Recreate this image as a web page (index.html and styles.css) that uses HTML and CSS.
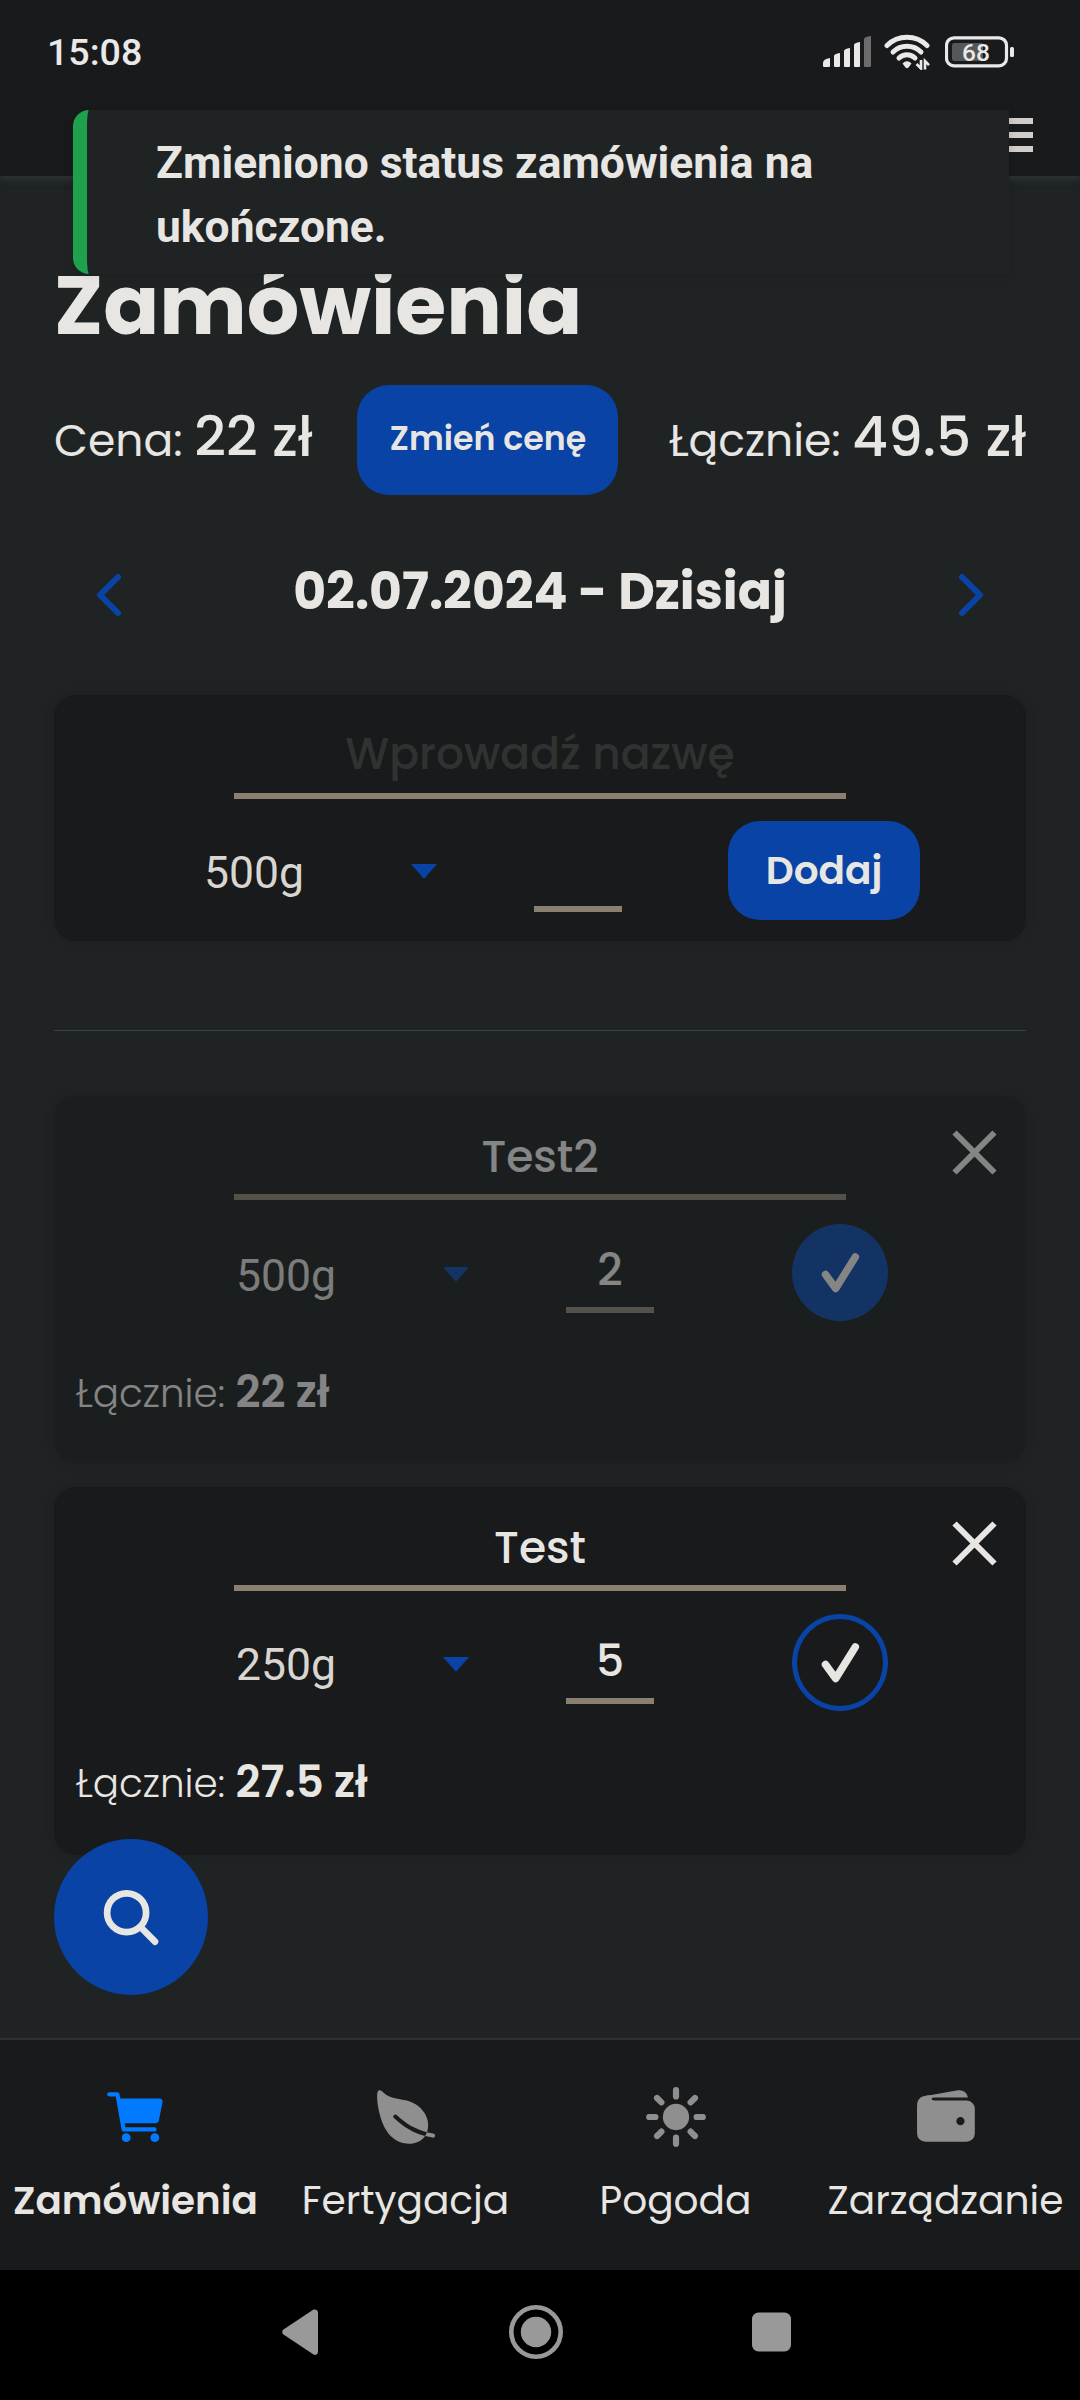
FILE: index.html
```html
<!DOCTYPE html>
<html lang="pl">
<head>
<meta charset="utf-8">
<title>Zamówienia</title>
<link rel="stylesheet" href="styles.css">
</head>
<body>
<div class="screen">
  <div class="status-bar">
    <span class="clock">15:08</span>
    <div class="status-icons">
      <svg width="48" height="34" viewBox="0 0 48 34">
        <g fill="#e9e9e9">
          <path d="M0 31v-3q0-4 7-5v8q0 1-1 1H1q-1 0-1-1z"/>
          <path d="M11 31V21q0-2 6-3v13q0 1-1 1h-4q-1 0-1-1z"/>
          <path d="M21 31V16q0-2 6-3v18q0 1-1 1h-4q-1 0-1-1z"/>
          <path d="M31 31V10q0-2 6-3v24q0 1-1 1h-4q-1 0-1-1z"/>
        </g>
        <path fill="#6c6c6d" d="M41 31V4q0-2 7-3v30q0 1-1 1h-5q-1 0-1-1z"/>
      </svg>
      <svg class="wifi" width="46" height="36" viewBox="0 0 46 36">
        <g fill="none" stroke="#e9e9e9" stroke-width="5" stroke-linecap="round">
          <path d="M3 11.500a28.500 28.500 0 0 1 40 0"/>
          <path d="M9 18a20 20 0 0 1 28 0"/>
          <path d="M15 24a11.500 11.500 0 0 1 16 0"/>
        </g>
        <path fill="#e9e9e9" d="M18.500 29.500q4.500-4.500 9 0L24.500 33.500q-1.500 1.500-3 0z"/>
        <path fill="none" stroke="#e9e9e9" stroke-width="2.600" d="M37 26v8.500l-4.500-4.500M41 35.500V27l4 4.200"/>
      </svg>
      <svg class="battery" width="70" height="32" viewBox="0 0 70 32">
        <rect x="7" y="7" width="31" height="18" rx="2.500" fill="#565758"/>
        <rect x="1.500" y="1.800" width="60" height="28" rx="7.500" fill="none" stroke="#e9e9e9" stroke-width="3.200"/>
        <rect x="65" y="11" width="4" height="10" rx="1.500" fill="#e9e9e9"/>
        <text class="battery-level" x="31" y="24.500" text-anchor="middle">68</text>
      </svg>
    </div>
  </div>

  <header class="header">
    <svg width="44" height="34" viewBox="0 0 44 34" fill="#d1cec9">
      <rect width="44" height="6"/><rect y="14" width="44" height="6"/><rect y="28" width="44" height="6"/>
    </svg>
  </header>

  <main class="main">
    <h1 class="title">Zamówienia</h1>

    <section class="prices">
      <p class="price">Cena: <b>22 zł</b></p>
      <button class="btn btn-price">Zmień cenę</button>
      <p class="price price-total">Łącznie: <b>49.5 zł</b></p>
    </section>

    <nav class="days">
      <svg class="chevron" width="28" height="46" viewBox="0 0 28 46"><path d="M23 5L5 23l18 18"/></svg>
      <h2 class="day">02.07.2024 - Dzisiaj</h2>
      <svg class="chevron" width="28" height="46" viewBox="0 0 28 46"><path d="M5 5l18 18L5 41"/></svg>
    </nav>

    <section class="card card-new">
      <div class="field name placeholder">Wprowadź nazwę</div>
      <div class="controls">
        <div class="select"><span>500g</span><i class="arrow"></i></div>
        <div class="field qty"></div>
        <button class="btn btn-add">Dodaj</button>
      </div>
    </section>

    <hr class="divider">

    <article class="card order done">
      <svg class="close" width="45" height="45" viewBox="0 0 45 45"><path d="M2.500 2.500l40 40M42.500 2.500l-40 40"/></svg>
      <div class="field name">Test2</div>
      <div class="controls">
        <div class="select"><span>500g</span><i class="arrow"></i></div>
        <div class="field qty">2</div>
        <div class="check"><svg width="40" height="42" viewBox="-20 -21 40 42"><path d="M-14.500 1.500L-4.300 15.500 15.300-16"/></svg></div>
      </div>
      <p class="sum">Łącznie: <b>22 zł</b></p>
    </article>

    <article class="card order">
      <svg class="close" width="45" height="45" viewBox="0 0 45 45"><path d="M2.500 2.500l40 40M42.500 2.500l-40 40"/></svg>
      <div class="field name">Test</div>
      <div class="controls">
        <div class="select"><span>250g</span><i class="arrow"></i></div>
        <div class="field qty">5</div>
        <div class="check"><svg width="40" height="42" viewBox="-20 -21 40 42"><path d="M-14.500 1.500L-4.300 15.500 15.300-16"/></svg></div>
      </div>
      <p class="sum">Łącznie: <b>27.5 zł</b></p>
    </article>
  </main>

  <nav class="tabs">
    <a class="tab active">
      <svg width="66" height="66" viewBox="0 0 512 512"><circle cx="180" cy="416" r="34"/><circle cx="402" cy="416" r="34"/><path d="M456.800 120.780a23.920 23.920 0 00-18.560-8.780H133.890l-6.130-34.780A16 16 0 00112 64H48a16 16 0 000 32h50.580l45.660 258.780A16 16 0 00160 368h240a16 16 0 000-32H173.420l-5.640-32h241.660A24.070 24.070 0 00433 284.710l28.800-144a24 24 0 00-5-19.930z"/></svg>
      <span>Zamówienia</span>
    </a>
    <a class="tab">
      <svg width="66" height="66" viewBox="0 0 512 512"><path d="M161.350 242a16 16 0 0122.620-.680c73.630 69.360 147.510 111.560 234.450 133.070 11.730-32 12.770-67.220 2.640-101.580-13.440-45.590-44.740-85.310-90.490-114.860-40.840-26.380-81.660-33.250-121.150-39.890-49.820-8.380-96.880-16.300-141.790-63.850-5-5.260-11.810-7.370-18.320-5.660-7.440 2-12.430 7.880-14.820 17.600-5.600 22.750-2 86.510 13.750 153.820 25.290 108.140 65.650 162.860 95.060 189.730 38 34.690 87.620 53.900 136.930 53.900a186 186 0 0027.770-2.040c41.710-6.320 76.430-27.270 96-57.750-89.490-23.280-165.940-67.550-242-139.160a16 16 0 01-.650-22.650zM467.430 384.190c-16.830-2.590-33.130-5.840-49-9.770a157.710 157.710 0 01-12.130 25.680c-.730 1.250-1.500 2.490-2.290 3.710a584.210 584.210 0 0058.560 12 16 16 0 104.870-31.620z"/></svg>
      <span>Fertygacja</span>
    </a>
    <a class="tab">
      <svg width="66" height="66" viewBox="0 0 512 512"><circle cx="256" cy="256" r="102"/><path class="rays" d="M256 48v48M256 416v48M48 256h48M416 256h48M369.140 142.860l33.940-33.940M108.920 403.080l33.940-33.940M369.140 369.140l33.940 33.940M108.920 108.920l33.940 33.940"/></svg>
      <span>Pogoda</span>
    </a>
    <a class="tab">
      <svg width="66" height="66" viewBox="0 0 512 512"><path d="M95.500 104h320a87.730 87.730 0 0111.180.710 66 66 0 00-77.510-55.560L86 94.080h-.300a66 66 0 00-41.070 26.130A87.570 87.570 0 0195.500 104z"/><path fill-rule="evenodd" d="M415.500 128h-320a64.070 64.070 0 00-64 64v192a64.070 64.070 0 0064 64h320a64.070 64.070 0 0064-64V192a64.070 64.070 0 00-64-64zM368 320a32 32 0 1132-32 32 32 0 01-32 32z"/><path d="M32 259.500V160c0-21.670 12-58 53.650-65.870C121 87.500 156 87.500 156 87.500s23 16 4 16-18.500 24.500 0 24.500 0 23.500 0 23.500L85.500 236z"/></svg>
      <span>Zarządzanie</span>
    </a>
  </nav>

  <div class="system-nav">
    <svg width="60" height="60" viewBox="0 0 60 60"><path d="M45 7.500a3 3 0 0 1 3 2.500v40a3 3 0 0 1-4.500 2.500L13.500 32.500a3 3 0 0 1 0-5L43.500 7.500z"/></svg>
    <svg width="60" height="60" viewBox="0 0 60 60"><circle cx="30" cy="30" r="24.700" fill="none" stroke="#999" stroke-width="4.600"/><circle cx="30" cy="30" r="15.200"/></svg>
    <svg width="60" height="60" viewBox="0 0 60 60"><rect x="10" y="10.500" width="39" height="39" rx="6.500"/></svg>
  </div>

  <button class="search">
    <svg width="60" height="60" viewBox="0 0 60 60"><ellipse cx="25.600" cy="25.700" rx="19.500" ry="19.400"/><path d="M40 40.500l14 14.200"/></svg>
  </button>

  <div class="toast">Zmieniono status zamówienia na<br>ukończone.</div>
</div>
</body>
</html>
```
FILE: styles.css
```css
* { box-sizing: border-box; margin: 0; padding: 0; }

body {
  background: #1f2324;
  color: #e8e6e3;
  font-family: Poppins, Inter, sans-serif;
}

svg { display: block; flex: none; }

.screen {
  position: relative;
  display: flex;
  flex-direction: column;
  width: 1080px;
  height: 2400px;
  overflow: hidden;
}

/* Status bar and header */
.status-bar {
  display: flex;
  align-items: center;
  justify-content: space-between;
  height: 104px;
  padding: 0 65px 0 47px;
  background: #191a1c;
}
.clock { font: 500 37.6px/104px Roboto, sans-serif; color: #e9e9e9; }
.status-icons { display: flex; align-items: center; }
.wifi { margin: 0 15px 0 13px; }
.battery { margin-top: -1px; }
.battery-level { font: 500 24.500px Roboto, sans-serif; fill: #e9e9e9; }

.header {
  position: relative;
  z-index: 1;
  display: flex;
  justify-content: flex-end;
  height: 72px;
  padding: 14px 47px 0 0;
  background: #191a1c;
  box-shadow: 0 2px 8px #34393b;
  clip-path: inset(0 0 -14px 0);
}

/* Page content */
.main { height: 1862px; padding: 79px 54px 0; }

.title { padding-top: 1px; font-size: 82.600px; font-weight: 700; line-height: 99px; }

.prices { display: flex; height: 110px; margin-top: 30px; }
.price { padding-top: 1px; font-size: 44px; font-weight: 400; line-height: 109px; white-space: nowrap; }
.price b { font-size: 55px; font-weight: 500; line-height: 1; }
.price-total { margin-left: auto; }

.btn {
  border: 0;
  border-radius: 32px;
  background: #0843a5;
  color: #e8e6e3;
  font-family: inherit;
  font-weight: 600;
}
.btn-price { width: 261px; margin-left: 45px; padding-bottom: 3px; font-size: 33.200px; font-weight: 600; }
.btn-add { width: 192px; height: 99px; margin: 1px 0 0 106px; font-size: 39px; }

.days {
  display: flex;
  align-items: center;
  justify-content: space-between;
  height: 80px;
  margin-top: 56px;
  padding: 0 41px;
}
.day { padding-top: 2px; font-size: 50.400px; font-weight: 700; line-height: 80px; }
.chevron { margin-top: 8px; fill: none; stroke: #0843a5; stroke-width: 6; stroke-linecap: round; stroke-linejoin: round; }

/* Cards */
.card {
  position: relative;
  padding: 28px 0 0;
  border-radius: 22px;
  background: #191a1b;
  box-shadow: 0 0 12px rgba(0, 0, 0, .12);
}
.card-new { height: 246px; margin-top: 64px; }
.order { height: 367px; }
.order + .order { height: 368px; margin-top: 24px; }
.done { opacity: .5; }

.field {
  height: 76px;
  border-bottom: 6px solid #8a8072;
  font-size: 44px;
  font-weight: 500;
  line-height: 65px;
  text-align: center;
}
.name { width: 612px; margin: 0 auto; }
.placeholder { color: #303232; line-height: 61px; }
.qty { width: 88px; margin: 16px 0 0 96px; }

.controls { display: flex; height: 100px; margin-top: 21px; padding-left: 150px; }
.select {
  display: flex;
  align-items: center;
  justify-content: space-between;
  width: 234px;
  font: 400 44.500px/1 Roboto, sans-serif;
  color: #d9d6d1;
}
.select span { margin-top: 7px; }
.arrow { border: 13.500px solid transparent; border-top: 15px solid #0843a5; border-bottom: 0; margin-top: 3px; }
.card-new .arrow { margin-right: 1px; }

.order .controls { height: 97px; margin-top: 24px; padding-left: 182px; }
.order .select { width: 233px; }
.order + .order .controls { margin-top: 23px; }
.order + .order .select span { margin-top: 6px; }
.order .qty { margin: 13px 0 0 97px; }
.order + .order .qty { margin-top: 14px; }
.check {
  display: flex;
  align-items: center;
  justify-content: center;
  width: 96px;
  height: 97px;
  margin-left: 138px;
  border: 5.500px solid #0843a5;
  border-radius: 50%;
}
.done .check { background: #0843a5; }
.check path { fill: none; stroke: #e8e6e3; stroke-width: 7.500; stroke-linecap: round; stroke-linejoin: round; }

.close { position: absolute; top: 34px; right: 29.500px; stroke: #e8e6e3; stroke-width: 6; }

.sum { margin-top: 42px; padding-left: 22px; font-size: 38.900px; font-weight: 300; line-height: 61px; }
.sum b { font-size: 43.500px; font-weight: 600; line-height: 1; }

.divider { height: 1px; margin: 89px 0 65px; border: 0; background: #3a3f40; }

/* Bottom tabs */
.tabs {
  display: grid;
  grid-template-columns: repeat(4, 1fr);
  height: 232px;
  border-top: 2px solid #2d3132;
  background: #191a1c;
}
.tab {
  display: flex;
  flex-direction: column;
  align-items: center;
  gap: 20.500px;
  padding: 44px 0 0 1px;
  font-size: 39.100px;
  line-height: 60px;
}
.tab svg { fill: #8f8f8f; }
.rays { stroke: #8f8f8f; stroke-width: 48; stroke-linecap: round; }
.active { font-size: 38.900px; font-weight: 600; }
.active svg { fill: #007bff; }

.system-nav {
  display: flex;
  align-items: center;
  gap: 176px;
  height: 130px;
  padding: 0 0 6px 270px;
  background: #000;
}
.system-nav svg { fill: #999; }

/* Floating elements */
.search {
  position: absolute;
  left: 54px;
  top: 1839px;
  display: flex;
  align-items: flex-start;
  width: 154px;
  height: 156px;
  padding: 48px 0 0 47px;
  border: 0;
  border-radius: 50%;
  background: #0843a5;
}
.search svg { fill: none; stroke: #e8e6e3; stroke-width: 6.700; stroke-linecap: round; }

.toast {
  position: absolute;
  z-index: 2;
  left: 73px;
  top: 110px;
  width: 936px;
  height: 164px;
  padding: 22px 0 0 69px;
  border-left: 14px solid #1ea04c;
  border-radius: 16px 0 0 16px;
  background: #1f2324;
  box-shadow: 0 0 10px rgba(0, 0, 0, .15);
  font: 700 44.400px/63.500px Roboto, sans-serif;
}
```
